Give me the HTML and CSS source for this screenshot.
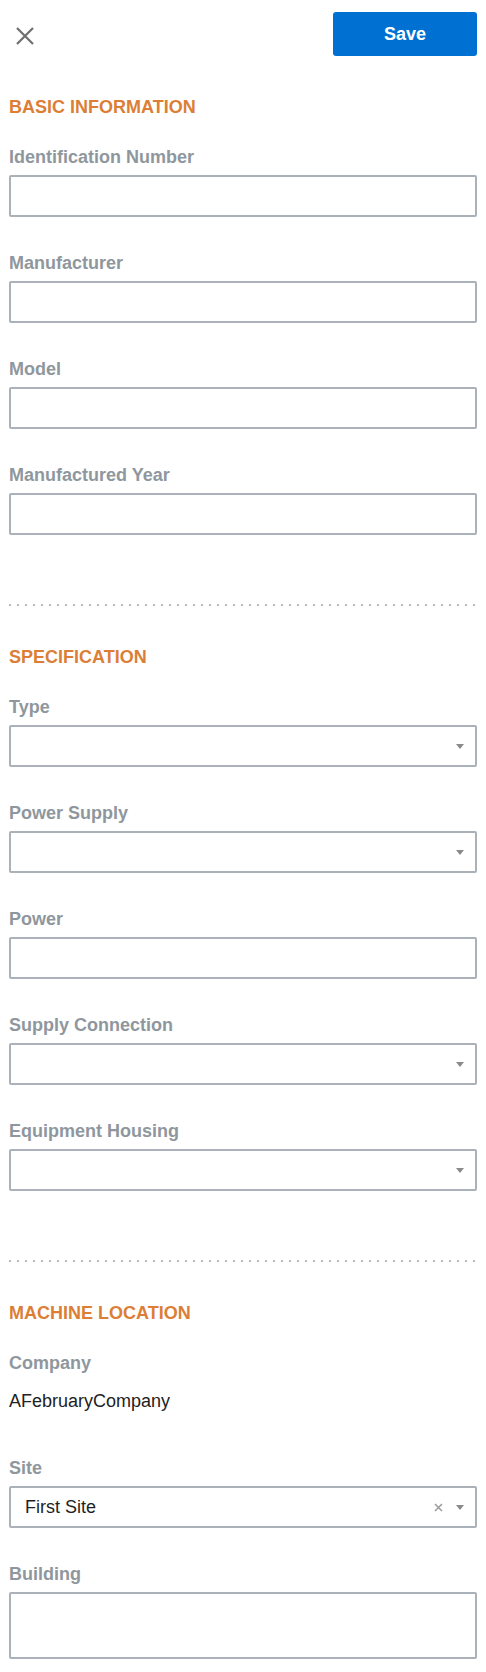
FILE: index.html
```html
<!DOCTYPE html>
<html lang="en">
<head>
<meta charset="utf-8">
<title>Machine</title>
<link rel="stylesheet" href="styles.css">
</head>
<body>
<header class="topbar">
  <button class="close" aria-label="Close">
    <svg width="18" height="18" viewBox="0 0 18 18"><path d="M1 1 L17 17 M17 1 L1 17" stroke="#6f6f6f" stroke-width="2.2" fill="none"/></svg>
  </button>
  <button class="save">Save</button>
</header>
<main class="form">
  <section class="section">
    <h2 class="section-title">BASIC INFORMATION</h2>
    <div class="field"><div class="label">Identification Number</div><div class="input"></div></div>
    <div class="field"><div class="label">Manufacturer</div><div class="input"></div></div>
    <div class="field"><div class="label">Model</div><div class="input"></div></div>
    <div class="field"><div class="label">Manufactured Year</div><div class="input"></div></div>
  </section>
  <div class="divider"></div>
  <section class="section">
    <h2 class="section-title">SPECIFICATION</h2>
    <div class="field"><div class="label">Type</div><div class="input select"><span class="value"></span><span class="caret"></span></div></div>
    <div class="field"><div class="label">Power Supply</div><div class="input select"><span class="value"></span><span class="caret"></span></div></div>
    <div class="field"><div class="label">Power</div><div class="input"></div></div>
    <div class="field"><div class="label">Supply Connection</div><div class="input select"><span class="value"></span><span class="caret"></span></div></div>
    <div class="field"><div class="label">Equipment Housing</div><div class="input select"><span class="value"></span><span class="caret"></span></div></div>
  </section>
  <div class="divider"></div>
  <section class="section">
    <h2 class="section-title">MACHINE LOCATION</h2>
    <div class="field"><div class="label">Company</div><div class="static-value">AFebruaryCompany</div></div>
    <div class="field"><div class="label">Site</div><div class="input select"><span class="value">First Site</span><span class="clear"><svg width="9" height="9" viewBox="0 0 9 9"><path d="M1 1 L8 8 M8 1 L1 8" stroke="#9a9a9a" stroke-width="1.5" fill="none"/></svg></span><span class="caret"></span></div></div>
    <div class="field"><div class="label">Building</div><div class="input textarea"></div></div>
  </section>
</main>
</body>
</html>
```

FILE: styles.css
```css
* { box-sizing: border-box; }
html, body { margin: 0; padding: 0; background: #fff; }
body {
  font-family: "Liberation Sans", Arial, Helvetica, sans-serif;
  font-size: 18px;
  color: #222;
}
.topbar {
  display: flex;
  justify-content: space-between;
  align-items: center;
  padding: 12px 9px 0 16px;
}
.close {
  border: 0;
  background: none;
  padding: 0;
  width: 18px;
  height: 18px;
  margin-top: 3px;
  display: block;
}
.close svg { display: block; }
.save {
  width: 144px;
  height: 44px;
  border: 0;
  border-radius: 3px;
  background: #0070d2;
  color: #fff;
  font-family: inherit;
  font-size: 18px;
  font-weight: bold;
  padding: 0;
}
.form { padding: 41px 9px 0; }
.section-title {
  margin: 0 0 30px;
  font-size: 18px;
  line-height: 20px;
  font-weight: bold;
  color: #dc7e35;
}
.field { margin-bottom: 36px; }
.label {
  font-size: 18px;
  line-height: 20px;
  font-weight: bold;
  color: #8f979e;
  margin-bottom: 8px;
}
.input {
  height: 42px;
  border: 2px solid #aab1b9;
  border-radius: 2px;
  background: #fff;
}
.input.textarea { height: 67px; }
.select {
  display: flex;
  align-items: center;
  padding: 0 11px 0 14px;
}
.select .value {
  flex: 1;
  font-size: 18px;
  line-height: 20px;
  color: #1f1f1f;
}
.select .clear {
  display: block;
  width: 9px;
  height: 9px;
  margin-right: 13px;
}
.select .clear svg { display: block; }
.caret {
  width: 0;
  height: 0;
  border-left: 4.5px solid transparent;
  border-right: 4.5px solid transparent;
  border-top: 5px solid #8a8a8a;
}
.static-value {
  font-size: 18px;
  line-height: 20px;
  color: #222;
  padding: 10px 0 11px;
}
.divider {
  height: 2px;
  margin: 69px 0 41px;
  background-image: linear-gradient(to right, #b9b9b9 2px, transparent 2px);
  background-size: 8px 2px;
  background-repeat: repeat-x;
}
```
